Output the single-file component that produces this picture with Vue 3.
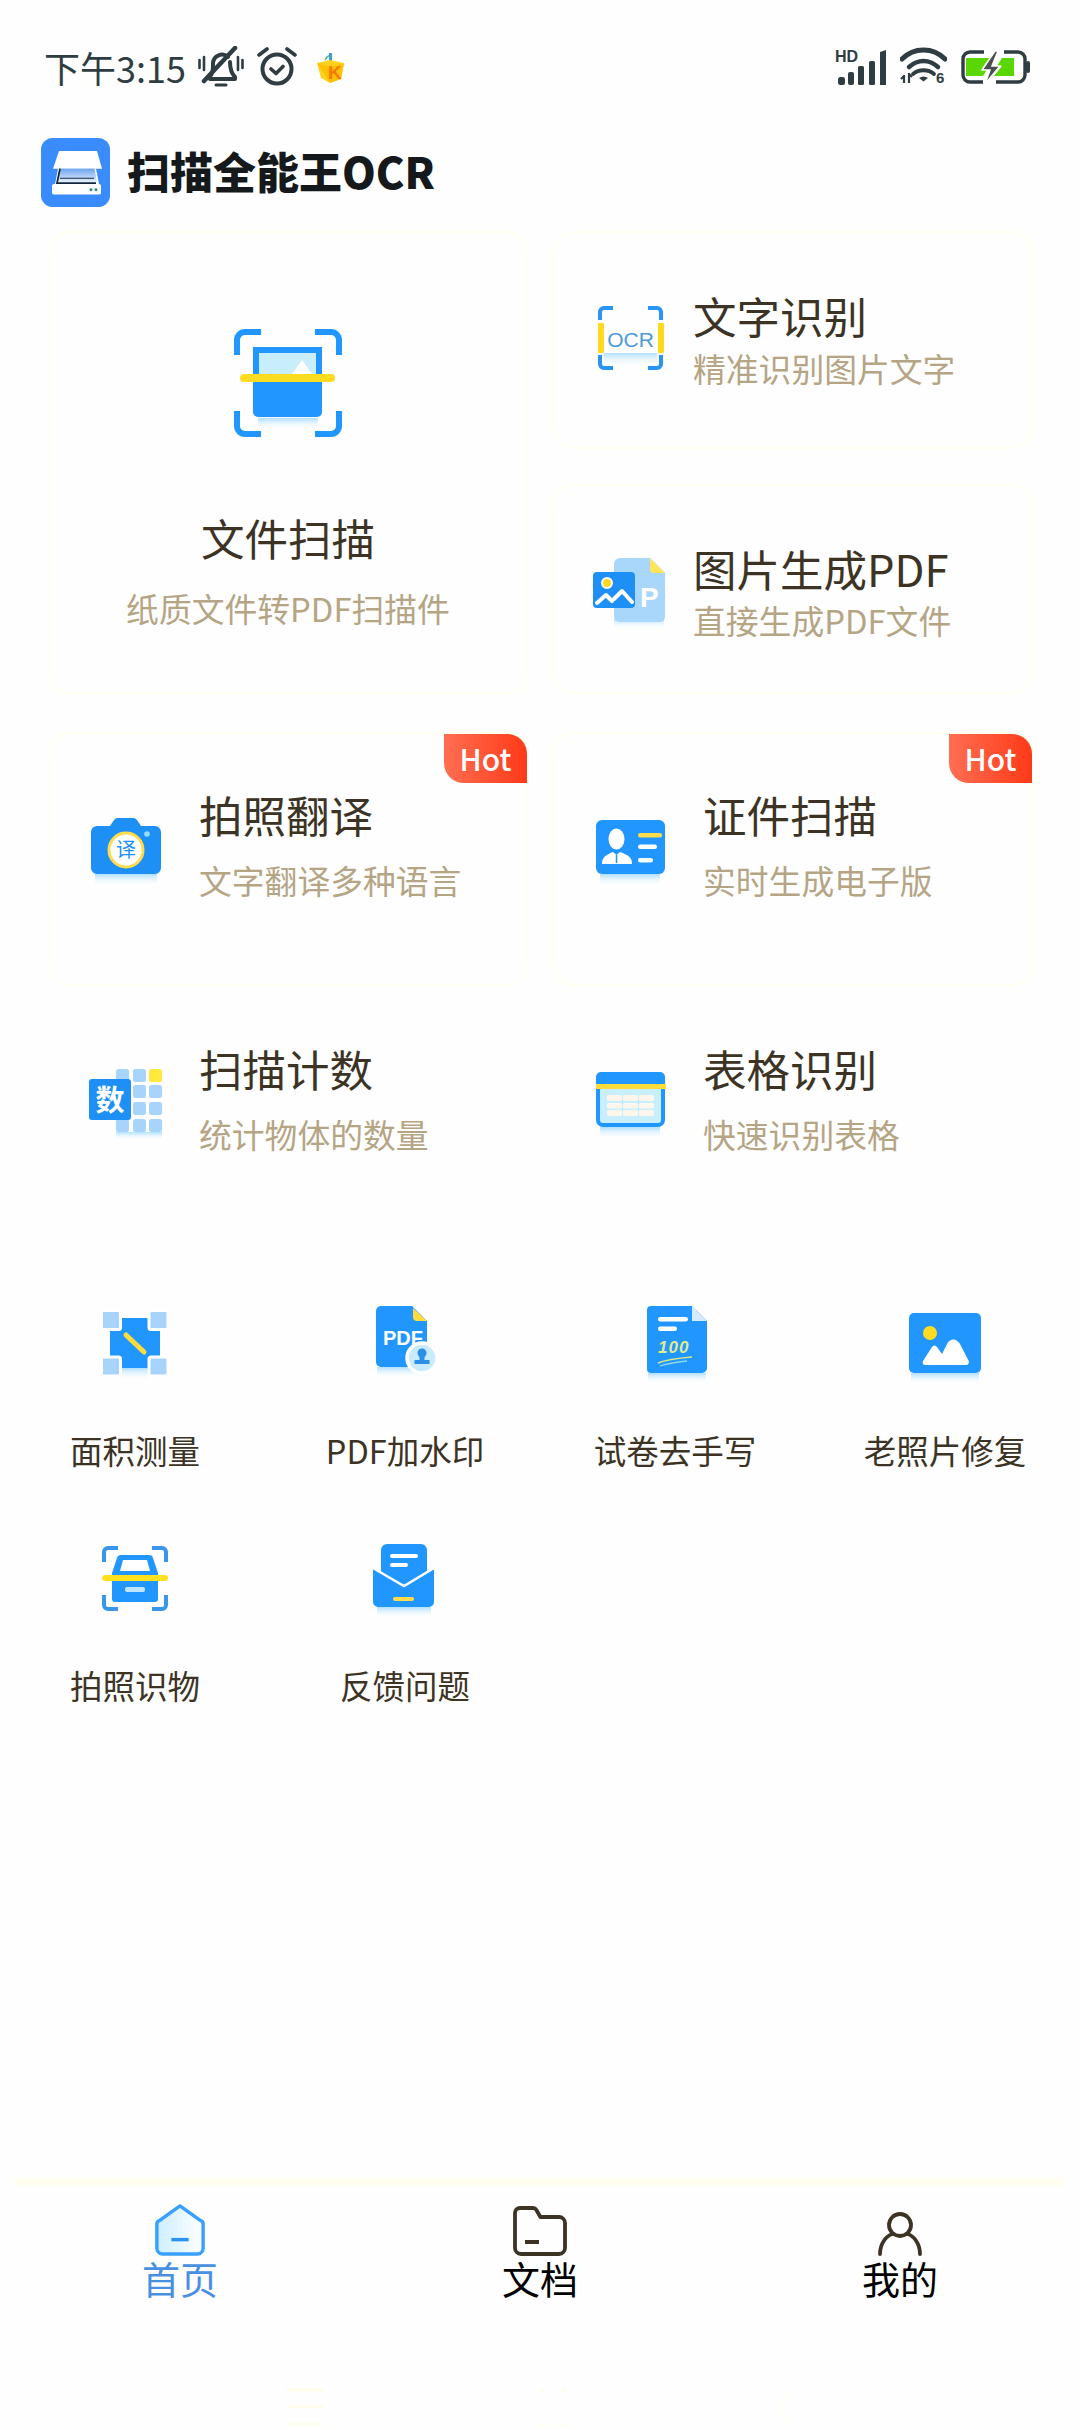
<script setup>
const smallTop = ['面积测量', 'PDF加水印', '试卷去手写', '老照片修复']
</script>

<template>
  <div class="page">
    <svg class="defs" aria-hidden="true">
      <defs>
        <linearGradient id="sh" x1="0" y1="0" x2="0" y2="1">
          <stop offset="0" stop-color="#aedfff" />
          <stop offset="1" stop-color="#ffffff" stop-opacity="0" />
        </linearGradient>
        <linearGradient id="glass" x1="0" y1="0" x2="0" y2="1">
          <stop offset="0" stop-color="#6ea4ee" />
          <stop offset="1" stop-color="#e6f0fd" />
        </linearGradient>
        <linearGradient id="home" x1="0" y1="0" x2="1" y2="0">
          <stop offset="0" stop-color="#cdeeff" />
          <stop offset="1" stop-color="#ffffff" />
        </linearGradient>
      </defs>
    </svg>

    <header class="status">
      <div class="status-left">
        <span class="time">下午3:15</span>
        <svg class="s-bell" width="46" height="42" viewBox="0 0 46 42" fill="none" stroke="#2f3d42">
          <path d="M11 31c4-3 4-7 4-14a9 9 0 0 1 15-6M32 16c0 7 1 11 5 15v2H12" stroke-width="4" stroke-linecap="round" stroke-linejoin="round" />
          <path d="M18 39h10" stroke-width="3" stroke-linecap="round" />
          <path d="M37 2 6 35" stroke-width="4.5" stroke-linecap="round" />
          <path d="M1.500 14v8M6 11v13M40 11v13M44.500 14v8" stroke-width="2.600" stroke-linecap="round" />
        </svg>
        <svg class="s-alarm" width="40" height="40" viewBox="0 0 40 40" fill="none" stroke="#2f3d42">
          <circle cx="20" cy="22" r="14.500" stroke-width="4" />
          <path d="M14 22l5 4.500 7-7M2 8l8-6M38 8l-8-6" stroke-width="3.600" stroke-linecap="round" stroke-linejoin="round" />
        </svg>
        <svg class="s-k" width="30" height="34" viewBox="0 0 30 34">
          <path d="M10 10l3-4M13 6l4 1" stroke="#53b6a6" stroke-width="1.600" fill="none" />
          <path d="M14 3h3v8h-3z" fill="#3f9dc8" />
          <path d="M2 13l13-3 14 3-3 16-11 4-9-5z" fill="#ffd21f" />
          <path d="M2 13l13 4 14-4-3 16-11 4z" fill="#ffc107" />
          <text x="13" y="29" class="k-letter">K</text>
        </svg>
      </div>
      <div class="status-right">
        <svg width="52" height="36" viewBox="0 0 52 36" fill="#2f3d42">
          <text x="0" y="13" class="hd">HD</text>
          <rect x="3" y="28" width="7" height="8" rx="2.500" />
          <rect x="13" y="23" width="6" height="13" rx="2" />
          <rect x="23" y="17" width="6" height="19" rx="1.500" />
          <rect x="34" y="12" width="6" height="24" rx="1.500" />
          <path d="M45 3l6-2v35h-6z" />
        </svg>
        <svg class="s-wifi" width="47" height="42" viewBox="0 0 47 42" fill="none" stroke="#2f3d42">
          <path d="M2 13C14 1 33 1 45 13" stroke-width="5" stroke-linecap="round" />
          <path d="M9 21c9-8 20-8 29 0" stroke-width="4.500" stroke-linecap="round" />
          <path d="M13 28c6-5 15-5 21 0" stroke-width="3.800" stroke-linecap="round" />
          <path d="M19 32c3-2 6-2 9 0l-4.500 3.500z" fill="#2f3d42" stroke="none" />
          <path d="M4 29v8M1 33l3-3M9 27v10M9 28l3 3" stroke-width="2.200" />
          <text x="36" y="37" class="six">6</text>
        </svg>
        <svg width="70" height="34" viewBox="0 0 70 34" fill="none">
          <path d="M24 2H10a7 7 0 0 0-7 7v16a7 7 0 0 0 7 7h13M44 2h14a7 7 0 0 1 7 7v16a7 7 0 0 1-7 7H36" stroke="#2f3d42" stroke-width="3.400" />
          <path d="M6 8h24l-8 10h6l-5 8H6z" fill="#5ad600" />
          <path d="M42 8h12v18H34l8-10h-5z" fill="#5ad600" />
          <path d="M35 1 22 20h8l-5 14 15-18h-8l6-15z" fill="#4a4f4f" stroke="#fff" stroke-width="1.500" />
          <rect x="66" y="11" width="4" height="12" rx="2" fill="#2f3d42" />
        </svg>
      </div>
    </header>

    <div class="brand">
      <svg class="brand-logo" width="69" height="69" viewBox="0 0 69 72" preserveAspectRatio="none">
        <rect width="69" height="72" rx="12" fill="#3a8bfb" />
        <path d="M18 13.500h38l5 18.500H12z" fill="#fff" />
        <path d="M17 32h38l3 16H14z" fill="#fff" />
        <path d="M19.500 32h34l2.500 14H16.500z" fill="url(#glass)" />
        <path d="M19 32l-3 15h39" fill="none" stroke="#10243f" stroke-width="1.800" />
        <path d="M19 42h34" stroke="#10243f" stroke-width="1" />
        <rect x="11" y="48" width="49" height="11" rx="2" fill="#fff" />
        <circle cx="50" cy="54" r="1.500" fill="#2a8a8a" />
        <circle cx="55" cy="54" r="1.500" fill="#2a8a8a" />
      </svg>
      <h1 class="brand-name">扫描全能王OCR</h1>
    </div>

    <section class="top-grid">
      <article class="card card-big">
        <svg width="108" height="108" viewBox="0 0 108 108" fill="none">
          <path d="M27 3H11a8 8 0 0 0-8 8v15M81 3h16a8 8 0 0 1 8 8v15M3 82v15a8 8 0 0 0 8 8h16M105 82v15a8 8 0 0 1-8 8H81" stroke="#2196ff" stroke-width="6" />
          <rect x="24" y="89" width="60" height="12" fill="url(#sh)" />
          <rect x="22" y="21" width="63" height="30" fill="#c8edfb" stroke="#2196ff" stroke-width="6" />
          <path d="M58 45l10-14 10 14z" fill="#fff" />
          <path d="M19 49h69v34a5 5 0 0 1-5 5H24a5 5 0 0 1-5-5z" fill="#2196ff" />
          <rect x="6" y="45" width="95" height="8" rx="4" fill="#ffdc1f" />
        </svg>
        <h2 class="title big-title">文件扫描</h2>
        <p class="sub big-sub">纸质文件转PDF扫描件</p>
      </article>

      <article class="card card-row card-tight">
        <svg class="ico ico-ocr" viewBox="0 0 80 80" fill="none">
          <rect x="14" y="55" width="53" height="14" fill="url(#sh)" />
          <path d="M23 10h-9a4 4 0 0 0-4 4v8M58 10h9a4 4 0 0 1 4 4v8M10 57v9a4 4 0 0 0 4 4h9M71 57v9a4 4 0 0 1-4 4h-9" stroke="#2a94f5" stroke-width="4" />
          <rect x="8" y="25" width="6" height="30" rx="1" fill="#ffd91f" />
          <rect x="68" y="25" width="6" height="30" rx="1" fill="#ffd91f" />
          <text x="40.500" y="49" class="ocr-text">OCR</text>
        </svg>
        <div class="copy">
          <h2 class="title">文字识别</h2>
          <p class="sub sub-near">精准识别图片文字</p>
        </div>
      </article>

      <article class="card card-row card-tight">
        <svg class="ico ico-pdf" viewBox="0 0 80 80" fill="none">
          <rect x="24" y="66" width="50" height="10" fill="url(#sh)" />
          <path d="M30 5h30l15 15v44a5 5 0 0 1-5 5H30a6 6 0 0 1-6-6V11a6 6 0 0 1 6-6z" fill="#a9d6fb" />
          <path d="M60 5l15 15H64a4 4 0 0 1-4-4z" fill="#ffe45c" />
          <text x="50" y="54" class="pdf-p">P</text>
          <rect x="3" y="19" width="42" height="36" rx="4" fill="#1e90f5" />
          <circle cx="17" cy="30" r="5" fill="#ffd91f" stroke="#fff" stroke-width="2" />
          <path d="M7 50l9-8 6 6M24 46l8-8 10 11" stroke="#fff" stroke-width="4" stroke-linecap="round" stroke-linejoin="round" />
        </svg>
        <div class="copy">
          <h2 class="title">图片生成PDF</h2>
          <p class="sub sub-near sub-pdf">直接生成PDF文件</p>
        </div>
      </article>
    </section>

    <section class="mid-grid">
      <article class="card card-row card-wide">
        <span class="hot">Hot</span>
        <svg class="ico" viewBox="0 0 80 80" fill="none">
          <rect x="9" y="63" width="62" height="12" fill="url(#sh)" />
          <path d="M11 15h13l4-6a5 5 0 0 1 3-2h17a5 5 0 0 1 3 2l4 6h14a6 6 0 0 1 6 6v36a6 6 0 0 1-6 6H11a6 6 0 0 1-6-6V21a6 6 0 0 1 6-6z" fill="#1e90f5" />
          <circle cx="40" cy="39" r="17" fill="#fff" stroke="#ffdc4a" stroke-width="3" />
          <circle cx="61" cy="23" r="2.800" fill="#9bdcff" />
          <text x="40" y="46" class="lens-text">译</text>
        </svg>
        <div class="copy">
          <h2 class="title">拍照翻译</h2>
          <p class="sub">文字翻译多种语言</p>
        </div>
      </article>

      <article class="card card-row card-wide">
        <span class="hot">Hot</span>
        <svg class="ico" viewBox="0 0 80 80" fill="none">
          <rect x="10" y="63" width="60" height="12" fill="url(#sh)" />
          <rect x="6" y="9" width="69" height="54" rx="6" fill="#2196ff" />
          <ellipse cx="26.500" cy="28" rx="8" ry="10.500" fill="#fff" />
          <path d="M12 53c0-7 4-9 11-12l3.500 3 3.500-3c8 3 12 5 12 12z" fill="#fff" />
          <path d="M26.500 44v8" stroke="#1b9bd8" stroke-width="1.500" />
          <rect x="48" y="22" width="24" height="4.500" rx="2.200" fill="#ffdc4a" />
          <rect x="48" y="33.500" width="19" height="4.500" rx="2.200" fill="#fff" />
          <rect x="48" y="47" width="15" height="4.500" rx="2.200" fill="#fff" />
        </svg>
        <div class="copy">
          <h2 class="title">证件扫描</h2>
          <p class="sub">实时生成电子版</p>
        </div>
      </article>

      <article class="card-row card-wide">
        <svg class="ico" viewBox="0 0 80 80" fill="none">
          <rect x="30" y="67" width="46" height="8" fill="url(#sh)" />
          <g fill="#a8d4fb">
            <rect x="30" y="4" width="13" height="13" rx="2.500" />
            <rect x="47" y="4" width="13" height="13" rx="2.500" />
            <rect x="63" y="4" width="13" height="13" rx="2.500" fill="#ffe93c" />
            <rect x="47" y="20" width="13" height="13" rx="2.500" />
            <rect x="63" y="20" width="13" height="13" rx="2.500" />
            <rect x="47" y="37" width="13" height="13" rx="2.500" />
            <rect x="63" y="37" width="13" height="13" rx="2.500" />
            <rect x="30" y="54" width="13" height="13" rx="2.500" />
            <rect x="47" y="54" width="13" height="13" rx="2.500" />
            <rect x="63" y="54" width="13" height="13" rx="2.500" />
          </g>
          <rect x="3" y="14" width="42" height="41" rx="3" fill="#1e90f5" />
          <text x="24" y="46" class="count-text">数</text>
        </svg>
        <div class="copy">
          <h2 class="title">扫描计数</h2>
          <p class="sub">统计物体的数量</p>
        </div>
      </article>

      <article class="card-row card-wide">
        <svg class="ico" viewBox="0 0 80 80" fill="none">
          <rect x="10" y="62" width="60" height="12" fill="url(#sh)" />
          <rect x="8" y="12" width="65" height="48" rx="5" fill="#c9efff" stroke="#2196ff" stroke-width="4" />
          <path d="M6 12a5 5 0 0 1 5-5h59a5 5 0 0 1 5 5v8H6z" fill="#2196ff" />
          <rect x="6" y="19" width="70" height="5" fill="#ffdc3a" />
          <g fill="#fff7ec">
            <rect x="17" y="30" width="15" height="6" rx="2" /><rect x="33" y="30" width="15" height="6" rx="2" /><rect x="49" y="30" width="15" height="6" rx="2" />
            <rect x="17" y="38" width="15" height="5.500" rx="2" /><rect x="33" y="38" width="15" height="5.500" rx="2" /><rect x="49" y="38" width="15" height="5.500" rx="2" />
            <rect x="17" y="45" width="15" height="6" rx="2" /><rect x="33" y="45" width="15" height="6" rx="2" /><rect x="49" y="45" width="15" height="6" rx="2" />
          </g>
        </svg>
        <div class="copy">
          <h2 class="title">表格识别</h2>
          <p class="sub">快速识别表格</p>
        </div>
      </article>
    </section>

    <section class="tools">
      <div class="tool">
        <svg class="ico" viewBox="0 0 80 80" fill="none">
          <rect x="12" y="62" width="56" height="12" fill="url(#sh)" />
          <rect x="15" y="12" width="50" height="50" fill="#2196ff" />
          <g fill="#a8d4fb" stroke="#fff" stroke-width="3">
            <rect x="6.500" y="4.500" width="19" height="19" rx="2" />
            <rect x="54" y="4.500" width="19" height="19" rx="2" />
            <rect x="6.500" y="51" width="19" height="19" rx="2" />
            <rect x="54" y="51" width="19" height="19" rx="2" />
          </g>
          <path d="M31 29l18 17" stroke="#ffdc3a" stroke-width="5" stroke-linecap="round" />
        </svg>
        <span class="tool-label">{{ smallTop[0] }}</span>
      </div>
      <div class="tool">
        <svg class="ico" viewBox="0 0 80 80" fill="none">
          <rect x="12" y="61" width="52" height="11" fill="url(#sh)" />
          <path d="M16 0h31l15 15v41a5 5 0 0 1-5 5H16a5 5 0 0 1-5-5V5a5 5 0 0 1 5-5z" fill="#2196ff" />
          <path d="M48 2l14 13H52a4 4 0 0 1-4-4z" fill="#ffdc3a" />
          <text x="18" y="39" class="pdf-mini">PDF</text>
          <circle cx="57" cy="52" r="15" fill="#c8ecfc" stroke="#fff" stroke-width="3.500" />
          <circle cx="57" cy="47" r="4.500" fill="#2b8fe8" />
          <path d="M54.500 50h5v4h5v4h-15v-4h5z" fill="#2b8fe8" />
        </svg>
        <span class="tool-label">{{ smallTop[1] }}</span>
      </div>
      <div class="tool">
        <svg class="ico" viewBox="0 0 80 80" fill="none">
          <rect x="13" y="67" width="58" height="10" fill="url(#sh)" />
          <path d="M16 0h41l15 15v47a5 5 0 0 1-5 5H16a4 4 0 0 1-4-4V4a4 4 0 0 1 4-4z" fill="#2196ff" />
          <path d="M57 0l15 15H57z" fill="#d4ecfd" />
          <rect x="23" y="11" width="30" height="4.500" rx="2.200" fill="#fff" />
          <rect x="23" y="20.500" width="19" height="4.500" rx="2.200" fill="#fff" />
          <text x="23" y="47" class="hundred">100</text>
          <path d="M23 57c10-4 22-5 34-6" stroke="#d8e88a" stroke-width="1.500" />
          <path d="M25 60c9-3 18-4 27-5" stroke="#8fd8e8" stroke-width="1.300" />
        </svg>
        <span class="tool-label">{{ smallTop[2] }}</span>
      </div>
      <div class="tool">
        <svg class="ico" viewBox="0 0 80 80" fill="none">
          <rect x="6" y="67" width="68" height="11" fill="url(#sh)" />
          <rect x="4" y="7" width="72" height="60" rx="5" fill="#2196ff" />
          <circle cx="25" cy="27" r="7" fill="#ffdc1f" />
          <path d="M20 59h41a3 3 0 0 0 2.500-4.500L55 38c-3.500-6-10-6-13 0l-5 10-5-7c-1.500-2-3.500-2-5 0l-9 14c-1 2 0 4 2 4z" fill="#fff" />
        </svg>
        <span class="tool-label">{{ smallTop[3] }}</span>
      </div>
      <div class="tool">
        <svg class="ico" viewBox="0 0 80 80" fill="none">
          <path d="M23 7h-10a4 4 0 0 0-4 4v10M57 7h10a4 4 0 0 1 4 4v10M9 54v10a4 4 0 0 0 4 4h10M71 54v10a4 4 0 0 1-4 4H57" stroke="#3a96ea" stroke-width="4" />
          <path d="M26 14h28a4 4 0 0 1 4 3l5 15H17l5-15a4 4 0 0 1 4-3z" fill="#2196ff" />
          <path d="M28 19h24l3 11H25z" fill="#fff" />
          <path d="M17 32h46v26a3 3 0 0 1-3 3H20a3 3 0 0 1-3-3z" fill="#2196ff" />
          <rect x="7" y="34" width="66" height="6" rx="3" fill="#ffe01f" />
          <rect x="30" y="46" width="20" height="5" rx="2" fill="#bfe4fc" />
        </svg>
        <span class="tool-label">拍照识物</span>
      </div>
      <div class="tool">
        <svg class="ico" viewBox="0 0 80 80" fill="none">
          <rect x="12" y="66" width="54" height="11" fill="url(#sh)" />
          <rect x="16" y="3" width="46" height="50" rx="6" fill="#2196ff" />
          <rect x="25" y="13" width="28" height="4" rx="2" fill="#fff" />
          <rect x="25" y="22" width="18" height="4" rx="2" fill="#fff" />
          <path d="M8 28l31 18 30-18v33a5 5 0 0 1-5 5H13a5 5 0 0 1-5-5z" fill="#2196ff" />
          <path d="M8 27l31 18 30-18" stroke="#fff" stroke-width="2.500" />
          <rect x="28" y="56" width="21" height="4" rx="2" fill="#ffdc4a" />
        </svg>
        <span class="tool-label">反馈问题</span>
      </div>
    </section>

    <nav class="nav">
      <div class="nav-item nav-active">
        <svg width="54" height="52" viewBox="0 0 54 54" fill="none">
          <path d="M27 2 48 17a4 4 0 0 1 3 4v25a6 6 0 0 1-6 6H9a6 6 0 0 1-6-6V21a4 4 0 0 1 3-4z" fill="url(#home)" stroke="#3aa0ff" stroke-width="3.600" stroke-linejoin="round" />
          <path d="M18 37h18" stroke="#2e93ee" stroke-width="3.600" />
        </svg>
        <span>首页</span>
      </div>
      <div class="nav-item">
        <svg width="54" height="52" viewBox="0 0 54 52" fill="none">
          <path d="M7 4h13a4 4 0 0 1 3.400 2l4 7H46a6 6 0 0 1 6 6v25a6 6 0 0 1-6 6H8a6 6 0 0 1-6-6V9a5 5 0 0 1 5-5z" stroke="#3c3325" stroke-width="3.800" stroke-linejoin="round" />
          <path d="M12 38h14" stroke="#3c3325" stroke-width="4" />
        </svg>
        <span>文档</span>
      </div>
      <div class="nav-item">
        <svg width="54" height="52" viewBox="0 0 54 52" fill="none">
          <circle cx="27" cy="21" r="11" stroke="#3c3325" stroke-width="3.800" />
          <path d="M7 50c0-11 7-19 13-20M47 50c0-11-7-19-13-20" stroke="#3c3325" stroke-width="3.800" stroke-linecap="round" />
        </svg>
        <span>我的</span>
      </div>
    </nav>

    <div class="gesture">
      <svg width="40" height="38" viewBox="0 0 40 38" fill="none"><path d="M1 2h38M1 19h38M1 36h38" stroke="#fffdea" stroke-width="2.500" /></svg>
      <svg width="34" height="38" viewBox="0 0 34 38" fill="none"><path d="M32 3a17 17 0 0 0-24 0M8 35a17 17 0 0 0 24 0" stroke="#fffdea" stroke-width="2.500" /></svg>
      <svg width="18" height="38" viewBox="0 0 18 38" fill="none"><path d="M17 1 1 19l16 18" stroke="#fffef0" stroke-width="2" /></svg>
    </div>
  </div>
</template>

<style scoped>
.page {
  width: 1080px;
  height: 2430px;
  overflow: hidden;
  display: flex;
  flex-direction: column;
  position: relative;
  background: #fefefe;
  font-family: "Noto Sans CJK SC", "Noto Sans", sans-serif;
  color: #3c3325;
}
.defs { position: absolute; width: 0; height: 0; }
.status {
  height: 134px;
  flex: none;
  display: flex;
  align-items: center;
  justify-content: space-between;
  padding: 0 50px 0 44px;
  box-sizing: border-box;
  color: #2f3d42;
}
.status-left, .status-right { display: flex; align-items: center; }
.time { font-size: 36px; line-height: 44px; width: 154px; }
.s-alarm { margin-left: 13px; }
.s-k { margin-left: 18px; }
.status-right { gap: 13px; }
.k-letter { font: 900 19px "Liberation Sans", sans-serif; fill: #f47a00; }
.hd { font: 700 16px "Liberation Sans", sans-serif; }
.six { font: 700 15px "Liberation Sans", sans-serif; fill: #2f3d42; stroke: none; }
.brand {
  flex: none;
  display: flex;
  align-items: center;
  gap: 17px;
  height: 69px;
  margin-top: 4px;
  padding-left: 41px;
}
.brand-name {
  margin: -5px 0 0;
  font-size: 43px;
  font-weight: 900;
  line-height: 60px;
  color: #15191c;
}
.top-grid {
  flex: none;
  margin: 24px 0 0 48px;
  display: grid;
  grid-template-columns: 480px 481px;
  grid-template-rows: 218px 210px;
  column-gap: 24px;
  row-gap: 35px;
}
.card {
  position: relative;
  box-sizing: border-box;
  box-shadow: inset 0 0 0 2px #fffff1;
  border-radius: 22px;
}
.card-big {
  grid-row: 1 / span 2;
  display: flex;
  flex-direction: column;
  align-items: center;
  padding-top: 98px;
}
.card-row {
  position: relative;
  display: flex;
  align-items: flex-start;
  box-sizing: border-box;
  padding: 55px 0 0 38px;
}
.ico { flex: none; width: 80px; height: 80px; }
.card-tight { padding-top: 57px; }
.card-tight .ico { margin-top: 10px; }
.card-tight .ico-pdf { margin-top: 12px; }
.card-tight .copy { margin-left: 23px; }
.card-wide .ico { margin-top: 24px; }
.card-wide .copy { margin-left: 33px; }
.title {
  margin: 0;
  font-size: 43.5px;
  font-weight: 400;
  line-height: 56px;
  color: #3c3325;
}
.sub {
  margin: 14px 0 0;
  font-size: 32.8px;
  line-height: 46px;
  color: #b5a585;
}
.sub-near { margin-top: 1px; }
.sub-pdf { margin-top: 0; }
.big-title { margin-top: 73px; }
.big-sub { margin-top: 19px; }
.mid-grid {
  flex: none;
  margin: 38px 0 0 48px;
  display: grid;
  grid-template-columns: 480px 481px;
  grid-auto-rows: 254px;
  column-gap: 24px;
}
.hot {
  position: absolute;
  top: 2px;
  right: 1px;
  width: 83px;
  height: 49px;
  border-radius: 0 20px 0 20px;
  background: linear-gradient(90deg, #ff6e52, #ff3a18);
  color: #fff;
  font-size: 30px;
  font-weight: 500;
  line-height: 49px;
  text-align: center;
}
.tools {
  flex: none;
  margin-top: 66px;
  display: grid;
  grid-template-columns: repeat(4, 270px);
  grid-auto-rows: 235px;
}
.tool {
  display: flex;
  flex-direction: column;
  align-items: center;
}
.tool-label {
  margin-top: 41px;
  font-size: 32.5px;
  line-height: 46px;
  color: #3c3325;
}
.ocr-text { font: 400 21px "Liberation Sans", sans-serif; fill: #4f9ad8; text-anchor: middle; }
.pdf-p { font: 700 28px "Liberation Sans", sans-serif; fill: #fff; }
.lens-text { font-size: 20px; fill: #1e90f5; text-anchor: middle; }
.count-text { font-size: 29px; font-weight: 700; fill: #fff; text-anchor: middle; }
.pdf-mini { font: 700 20px "Liberation Sans", sans-serif; fill: #fff; }
.hundred { font: italic 700 17px "Liberation Sans", sans-serif; fill: #e0ea90; letter-spacing: 1px; }
.nav {
  position: absolute;
  left: 0;
  right: 0;
  top: 2178px;
  display: grid;
  grid-template-columns: repeat(3, 360px);
  padding-top: 26px;
}
.nav::before {
  content: "";
  position: absolute;
  top: 0;
  left: 15px;
  right: 15px;
  height: 8px;
  background: #fffeee;
  filter: blur(1px);
}
.nav-item {
  display: flex;
  flex-direction: column;
  align-items: center;
  color: #000;
  font-size: 38px;
  line-height: 44px;
}
.nav-item svg { height: 52px; margin-bottom: 0; }
.nav-active { color: #4a90e2; }
.gesture {
  position: absolute;
  left: 285px;
  top: 2388px;
  display: flex;
  align-items: center;
  gap: 208px;
}
</style>
